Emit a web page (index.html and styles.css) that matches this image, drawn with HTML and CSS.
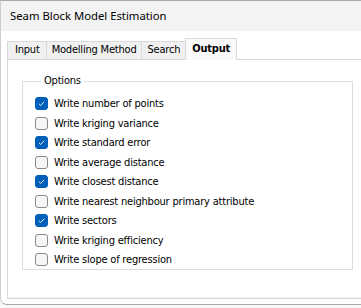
FILE: index.html
```html
<!DOCTYPE html>
<html>
<head>
<meta charset="utf-8">
<link rel="stylesheet" href="styles.css">
</head>
<body>
<div class="window">
  <div class="titlebar">Seam Block Model Estimation</div>
  <div class="content">
    <div class="tabs">
      <div class="tab first">Input</div>
      <div class="tab">Modelling Method</div>
      <div class="tab">Search</div>
      <div class="tab active">Output</div>
    </div>
    <div class="panel">
      <fieldset class="group">
        <legend>Options</legend>
        <label class="row"><span class="cb on"><svg viewBox="0 0 14 14"><path d="M3.6 7.2 L6 9.5 L10.4 4.8" /></svg></span>Write number of points</label>
        <label class="row"><span class="cb"></span>Write kriging variance</label>
        <label class="row"><span class="cb on"><svg viewBox="0 0 14 14"><path d="M3.6 7.2 L6 9.5 L10.4 4.8" /></svg></span>Write standard error</label>
        <label class="row"><span class="cb"></span>Write average distance</label>
        <label class="row"><span class="cb on"><svg viewBox="0 0 14 14"><path d="M3.6 7.2 L6 9.5 L10.4 4.8" /></svg></span>Write closest distance</label>
        <label class="row"><span class="cb"></span>Write nearest neighbour primary attribute</label>
        <label class="row"><span class="cb on"><svg viewBox="0 0 14 14"><path d="M3.6 7.2 L6 9.5 L10.4 4.8" /></svg></span>Write sectors</label>
        <label class="row"><span class="cb"></span>Write kriging efficiency</label>
        <label class="row"><span class="cb"></span>Write slope of regression</label>
      </fieldset>
    </div>
  </div>
</div>
</body>
</html>
```
FILE: styles.css
```css
html, body {
  margin: 0;
  padding: 0;
}
body {
  width: 361px;
  height: 308px;
  overflow: hidden;
  background: #f7f7f7;
  font-family: "DejaVu Sans Condensed", "DejaVu Sans", sans-serif;
  font-stretch: condensed;
  font-size: 11px;
  letter-spacing: -0.2px;
  color: #000;
}
.window {
  box-sizing: border-box;
  width: 361px;
  height: 305px;
  border: 1px solid #a9a9a9;
  border-right: none;
  border-left-color: #cfcfcf;
  border-radius: 0 0 0 7px;
  background: #ffffff;
  overflow: hidden;
}
.titlebar {
  height: 30px;
  background: #f3f3f3;
  padding-left: 9px;
  line-height: 30px;
  font-family: "Noto Sans", sans-serif;
  font-stretch: normal;
  letter-spacing: 0;
  font-size: 11.3px;
}
.content {
  padding: 7px 0 0 6px;
}
.tabs {
  display: flex;
  align-items: flex-end;
  height: 21px;
  position: relative;
  z-index: 1;
}
.tab {
  box-sizing: border-box;
  height: 18px;
  line-height: 16px;
  padding: 0 5px;
  border: 1px solid #d9d9d9;
  border-bottom: none;
  border-right: none;
  background: #f0f0f0;
  white-space: nowrap;
}
.tab.first {
  padding: 0 6px 0 7px;
}
.tab.active {
  height: 22px;
  margin-bottom: -1px;
  line-height: 20px;
  padding: 0 6px;
  font-weight: bold;
  background: #f9f9f9;
  border-right: 1px solid #d9d9d9;
}
.panel {
  box-sizing: border-box;
  height: 240px;
  border: 1px solid #d9d9d9;
  border-right: none;
  background: #ffffff;
  padding: 14px 0 0 14px;
  box-shadow: inset 0 -1px 0 #efefef;
}
.group {
  box-sizing: border-box;
  width: 331px;
  height: 196px;
  margin: 0;
  border: 1px solid #dcdcdc;
  padding: 6px 0 0 12px;
}
.group legend {
  padding: 0 3px;
  margin-left: 6px;
  line-height: 14px;
}
.row {
  display: flex;
  align-items: center;
  height: 19.5px;
  white-space: nowrap;
}
.cb {
  box-sizing: border-box;
  width: 13px;
  height: 13px;
  border: 1px solid #8a8a8a;
  border-radius: 3px;
  background: #f6f6f6;
  margin-right: 6px;
  flex: none;
  display: flex;
}
.cb.on {
  background: #005fb8;
  border-color: #005fb8;
}
.cb svg {
  width: 11px;
  height: 11px;
}
.cb svg path {
  fill: none;
  stroke: #ffffff;
  stroke-width: 1.1;
}
```
